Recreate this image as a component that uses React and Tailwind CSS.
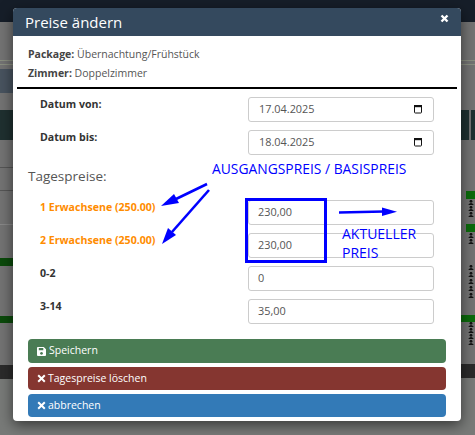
import React from "react";

const font = { fontFamily: "'Open Sans', sans-serif" };

function Row({ label, value, orange, date }) {
  return (
    <div className="flex h-[33px] items-start">
      <div className={`w-[220px] pl-[12px] text-[10.6px] font-bold leading-[15px] ${orange ? "text-[#ff8c00]" : "text-[#333]"}`}>{label}</div>
      <div className={`relative flex h-[25px] w-[186px] items-center rounded-[3px] border border-[#ccc] bg-white text-[10.9px] text-[#555] ${date ? "pl-[10px]" : "pl-[9px]"}`}>
        {value}
        {date && (
          <svg className="absolute right-[10px] top-[6px]" width="10" height="10" viewBox="0 0 10 10" fill="none">
            <rect x="1.5" y="2" width="7" height="7" rx="0.8" stroke="#111" strokeWidth="1" />
            <rect x="1" y="1" width="8" height="2.2" fill="#111" />
          </svg>
        )}
      </div>
    </div>
  );
}

function Btn({ color, icon, children, h }) {
  return (
    <div className={`flex items-center rounded-[4px] pl-[9px] text-[10.5px] text-white ${color} ${h}`}>
      {icon}
      {children}
    </div>
  );
}

const X = (
  <svg className="mr-[2px]" width="9" height="9" viewBox="0 0 9 9">
    <path d="M1.2 1.2 L7.8 7.8 M7.8 1.2 L1.2 7.8" stroke="#fff" strokeWidth="2" />
  </svg>
);
const Save = (
  <svg className="mr-[3px]" width="9" height="9" viewBox="0 0 10 10">
    <path fillRule="evenodd" fill="#fff" d="M1 0 H7.5 L10 2.5 V9 a1 1 0 0 1 -1 1 H1 a1 1 0 0 1 -1 -1 V1 a1 1 0 0 1 1 -1 Z M2 1 V3.5 H7 V1 Z M5 5.5 a1.6 1.6 0 1 0 .01 0 Z" />
  </svg>
);

function People({ count, gap }) {
  return (
    <div className="flex flex-col items-start pl-[2px]" style={{ gap }}>
      {Array.from({ length: count }).map((_, i) => (
        <svg key={i} width="6" height="5" viewBox="0 0 6 5">
          <circle cx="3" cy="1.3" r="1.4" fill="#111" />
          <path d="M0.2 5 Q3 1.2 5.8 5 Z" fill="#111" />
        </svg>
      ))}
    </div>
  );
}

function Band({ className }) {
  return <div className={className} />;
}

export default function App() {
  return (
    <div className="relative flex h-[435px] w-[475px] flex-col overflow-hidden bg-[#787a78]" style={font}>
      <div className="h-[22px] shrink-0 bg-[#161e29]" />
      {/* dimmed page behind the dialog */}
      <div className="flex flex-1 justify-between">
        <div className="flex w-[13px] flex-col bg-[#737373]">
          <Band className="mt-[38px] h-[5px] border-y border-[#8a8f80]" />
          <Band className="mt-[4px] h-[24px] bg-[#48535f]" />
          <Band className="mt-[17px] h-[30px] bg-[#1f3030]" />
          <Band className="mt-[27px] h-px bg-[#555]" />
          <Band className="mt-[22px] h-px bg-[#555]" />
          <Band className="mt-[33px] h-px bg-[#888]" />
          <Band className="mt-[33px] h-[8px] bg-[#0b4a0b]" />
          <Band className="mt-[50px] h-[7px] bg-[#0b4a0b]" />
          <Band className="mt-[42px] h-[14px] bg-[#2b2b2b]" />
          <Band className="flex-1 bg-[#787a78]" />
        </div>
        <div className="flex w-[14px] flex-col bg-[#737373]">
          <Band className="mt-[38px] h-[5px] border-y border-[#8a8f80]" />
          <div className="mt-[45px] flex h-[30px] gap-[2px]">
            <Band className="w-[8px] bg-[#1f3030]" />
            <Band className="flex-1 bg-[#1f3030]" />
          </div>
          <div className="mt-[51px] ml-[5px] flex flex-col">
            <Band className="h-[8px] bg-[#0b6a0b]" />
            <div className="h-[25px] pt-[1px]"><People count={3} gap="1px" /></div>
            <Band className="h-[8px] bg-[#0b6a0b]" />
            <div className="h-[83px] pt-[1px]">
              <People count={2} gap="1px" />
              <div className="mt-[21px]"><People count={5} gap="2px" /></div>
            </div>
            <Band className="-ml-[5px] h-[7px] bg-[#0b6a0b]" />
            <div className="h-[42px]"><People count={4} gap="1px" /></div>
          </div>
          <Band className="h-[14px] bg-[#2b2b2b]" />
          <Band className="flex-1 bg-[#787a78]" />
        </div>
      </div>

      {/* dialog */}
      <div className="absolute left-[13px] top-[8px] h-[413px] w-[448px] overflow-hidden rounded-[4px] bg-white shadow-[0_4px_14px_rgba(0,0,0,0.55)]">
        <div className="flex h-[28px] items-center justify-between bg-[#34495e] pl-[12px] pr-[12px] text-[15px] text-white">
          <span>Preise ändern</span>
          <svg className="mb-[8px]" width="9" height="9" viewBox="0 0 9 9">
            <path d="M1.5 1.5 L7.5 7.5 M7.5 1.5 L1.5 7.5" stroke="#fff" strokeWidth="2.4" />
          </svg>
        </div>
        <div className="pl-[15px] pt-[9px] text-[10.5px] leading-[19px] text-[#555]">
          <div><b className="text-[#444]">Package:</b> Übernachtung/Frühstück</div>
          <div><b className="text-[#444]">Zimmer:</b> Doppelzimmer</div>
        </div>
        <div className="ml-[4px] mt-[4px] h-[2px] w-[440px] bg-black" />
        <div className="pl-[15px] pt-[8px]">
          <Row label="Datum von:" value="17.04.2025" date />
          <Row label="Datum bis:" value="18.04.2025" date />
          <div className="mt-[3px] h-[34px] text-[13.5px] leading-[20px] text-[#555]">Tagespreise:</div>
          <Row label="1 Erwachsene (250.00)" value="230,00" orange />
          <Row label="2 Erwachsene (250.00)" value="230,00" orange />
          <Row label="0-2" value="0" />
          <Row label="3-14" value="35,00" />
        </div>
        <div className="flex flex-col gap-[4px] px-[15px] pt-[7px]">
          <Btn color="bg-[#4a7c54]" icon={Save} h="h-[24px]">Speichern</Btn>
          <Btn color="bg-[#853630]" icon={X} h="h-[23px]">Tagespreise löschen</Btn>
          <Btn color="bg-[#337ab7]" icon={X} h="h-[23px]">abbrechen</Btn>
        </div>
      </div>

      {/* hand-drawn annotations lying over the dialog */}
      <div className="absolute left-[245px] top-[198px] h-[65px] w-[82px] border-[3px] border-[#0000ff]" />
      <div className="absolute left-[212px] top-[161px] whitespace-nowrap text-[13.85px] leading-[16px] text-[#0000ff]">AUSGANGSPREIS / BASISPREIS</div>
      <div className="absolute left-[342px] top-[224px] text-[14px] leading-[19px] text-[#0000ff]">AKTUELLER<br />PREIS</div>
      <svg className="absolute left-0 top-0" width="475" height="435" viewBox="0 0 475 435" fill="none">
        <path d="M207 184 L176 199" stroke="#0000ff" strokeWidth="2.6" />
        <path d="M161 206 L174 194 L179 203 Z" fill="#0000ff" />
        <path d="M209 190 L172 232" stroke="#0000ff" strokeWidth="2.6" />
        <path d="M162 244 L168 228 L176 235 Z" fill="#0000ff" />
        <path d="M339 212.5 L384 211.5" stroke="#0000ff" strokeWidth="2.6" />
        <path d="M397 211.7 L382 207.5 L382 216 Z" fill="#0000ff" />
      </svg>
    </div>
  );
}
